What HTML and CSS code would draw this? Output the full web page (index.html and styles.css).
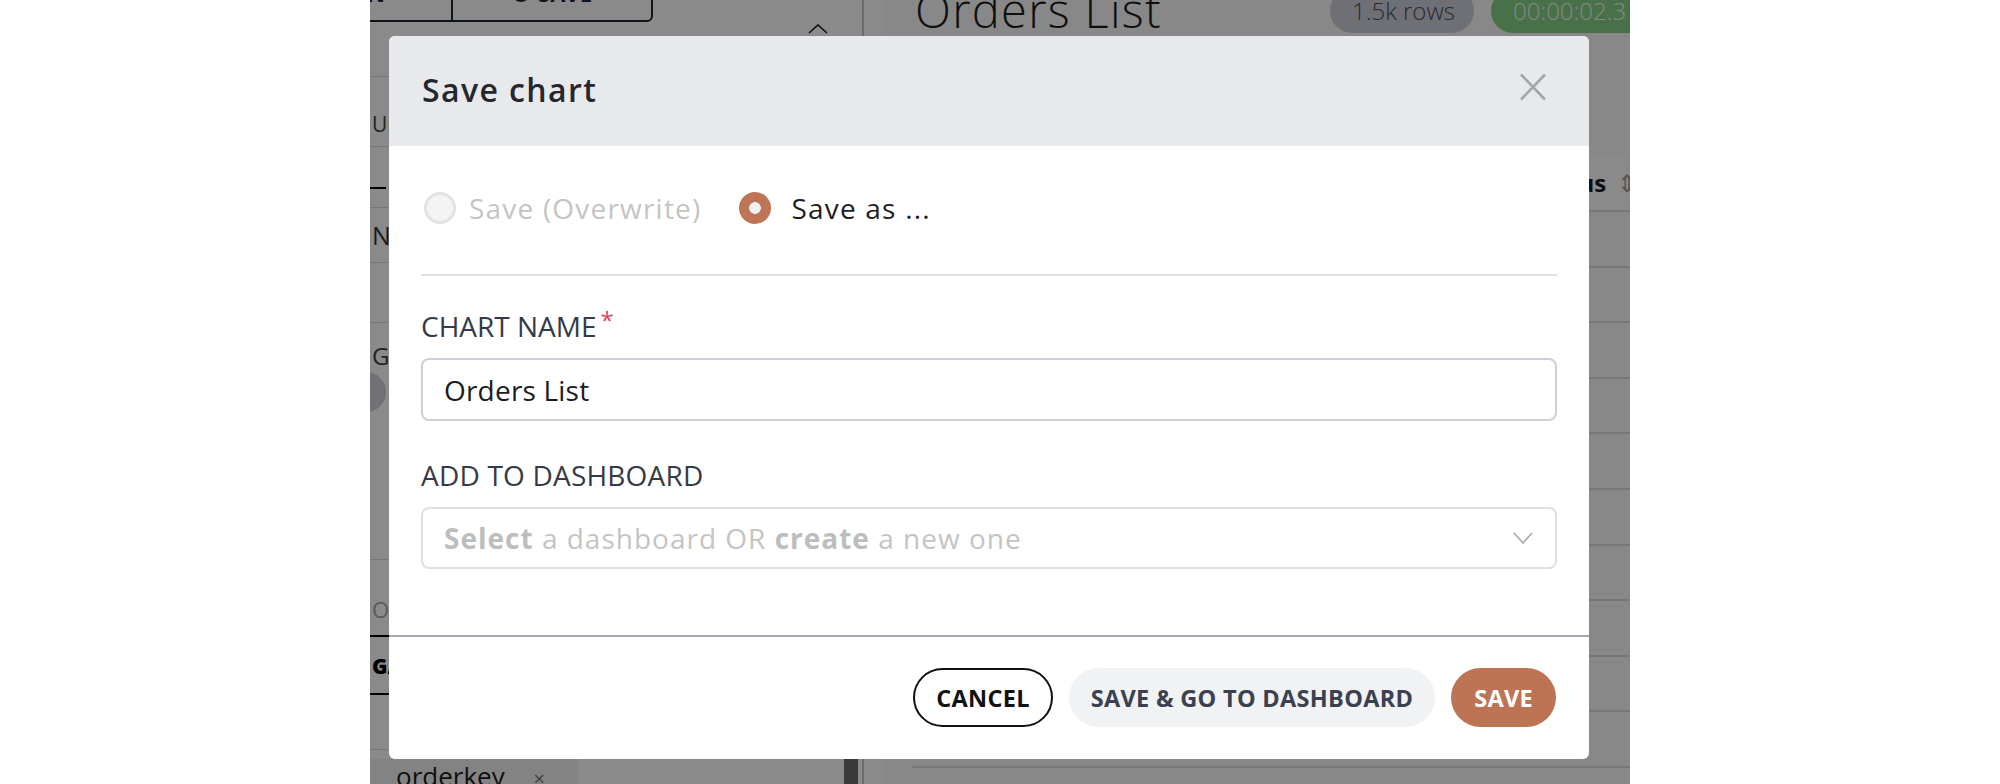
FILE: index.html
```html
<!DOCTYPE html>
<html lang="en">
<head>
<meta charset="utf-8">
<title>Save chart</title>
<link rel="stylesheet" href="styles.css">
</head>
<body>
<div class="app">
  <aside class="sidebar">
    <div class="sb-top">
      <div class="btn-group">
        <span class="tb-btn tb-run">RUN</span>
        <span class="tb-btn tb-save"><span class="tb-dot"></span>SAVE</span>
      </div>
      <svg class="collapse" width="20" height="10" viewBox="0 0 20 10"><path d="M1 9L10 1L19 9" fill="none" stroke="#1c1c1c" stroke-width="1.6"/></svg>
    </div>
    <div class="sb-sec sb-s1"><span class="sb-label">UM</span></div>
    <div class="sb-sec sb-s2"><span class="sb-dash"></span></div>
    <div class="sb-sec sb-s3"><span class="sb-label sb-label-lg">N</span></div>
    <div class="sb-sec sb-s4"></div>
    <div class="sb-sec sb-s5"><span class="sb-label sb-label-md">GE</span><span class="sb-avatar"></span></div>
    <div class="sb-sec sb-s6"><span class="sb-label sb-label-muted">OD</span></div>
    <div class="sb-sec sb-s7"><span class="sb-label sb-label-bold">GA</span></div>
    <div class="sb-sec sb-s8"></div>
    <div class="sb-s9">
      <span class="chip">orderkey <span class="chip-x">×</span></span>
      <span class="scroll-thumb"></span>
    </div>
  </aside>
  <div class="gutter"></div>
  <main class="content">
    <div class="content-head">
      <h1 class="page-title">Orders List</h1>
      <span class="pill pill-rows">1.5k rows</span>
      <span class="pill pill-time">00:00:02.3</span>
    </div>
    <div class="table">
      <div class="tr th">
        <span class="td c1"></span>
        <span class="td c2"></span>
        <span class="td c3">Status <span class="sort">⇕</span></span>
      </div>
      <div class="tr"></div>
      <div class="tr"></div>
      <div class="tr"></div>
      <div class="tr"></div>
      <div class="tr"></div>
      <div class="tr"></div>
      <div class="tr"></div>
      <div class="tr"></div>
      <div class="tr"></div>
      <div class="tr"></div>
    </div>
  </main>

  <div class="backdrop">
    <div class="modal" role="dialog" aria-labelledby="modal-title">
      <header class="modal-header">
        <h2 class="modal-title" id="modal-title">Save chart</h2>
        <button class="close-btn" aria-label="Close">
          <svg width="28" height="28" viewBox="0 0 28 28"><path d="M2 1.5L26 26.5M26 1.5L2 26.5" fill="none" stroke="#a2a5ac" stroke-width="2.6"/></svg>
        </button>
      </header>
      <div class="modal-body">
        <div class="radio-row">
          <label class="radio radio-disabled"><span class="radio-mark"></span>Save (Overwrite)</label>
          <label class="radio radio-checked"><span class="radio-mark"></span>Save as ...</label>
        </div>
        <div class="divider"></div>
        <div class="field-label">CHART NAME<span class="req">*</span></div>
        <div class="text-input">Orders List</div>
        <div class="field-label field-label-second">ADD TO DASHBOARD</div>
        <div class="select">
          <span class="placeholder"><b>Select</b> a dashboard OR <b>create</b> a new one</span>
          <svg class="chevron" width="20" height="12" viewBox="0 0 20 12"><path d="M1 1L10 11L19 1" fill="none" stroke="#a8a8a8" stroke-width="1.6"/></svg>
        </div>
      </div>
      <footer class="modal-footer">
        <button class="btn btn-outline">CANCEL</button>
        <button class="btn btn-light">SAVE &amp; GO TO DASHBOARD</button>
        <button class="btn btn-primary">SAVE</button>
      </footer>
    </div>
  </div>
</div>
</body>
</html>
```

FILE: styles.css
```css
* { box-sizing: border-box; }
html, body { margin: 0; padding: 0; }
body {
  background: #fff;
  font-family: "Open Sans", "Noto Sans", sans-serif;
  width: 2000px;
  height: 784px;
  overflow: hidden;
}

/* ---------- app behind the dialog ---------- */
.app {
  position: relative;
  width: 1260px;
  height: 784px;
  margin: 0 auto;
  background: #fff;
  display: flex;
  overflow: hidden;
}

.sidebar {
  width: 494px;
  flex: none;
  border-right: 2px solid #c4c8d0;
  display: flex;
  flex-direction: column;
  overflow: hidden;
}
.sb-top {
  height: 77px;
  flex: none;
  border-bottom: 1px solid #dcdcdc;
  display: flex;
  justify-content: space-between;
  align-items: flex-start;
  padding-right: 34px;
}
.btn-group {
  margin-top: -34px;
  margin-left: -20px;
  height: 56px;
  width: 303px;
  display: flex;
  border: 2px solid #1f2533;
  border-radius: 0 0 6px 6px;
}
.tb-btn {
  display: flex;
  align-items: flex-end;
  padding-bottom: 12px;
  font-size: 22px;
  font-weight: 700;
  color: #1f2533;
}
.tb-run {
  width: 101px;
  justify-content: flex-end;
  padding-right: 66px;
  border-right: 2px solid #1f2533;
}
.tb-save { flex: 1; justify-content: center; gap: 8px; }
.tb-dot { width: 18px; height: 18px; border-radius: 50%; background: #1f2533; margin-bottom: 6px; }
.collapse { margin-top: 24px; }

.sb-sec { flex: none; border-bottom: 1px solid #dcdcdc; padding-left: 2px; }
.sb-label { display: block; font-size: 21px; color: #444; line-height: 28px; }
.sb-label-lg { font-size: 25px; color: #333; }
.sb-label-md { font-size: 24px; color: #444; }
.sb-label-muted { font-size: 22px; color: #a6a6a6; }
.sb-label-bold { font-size: 21px; font-weight: 800; color: #000; }
.sb-s1 { height: 70px; padding-top: 33px; }
.sb-s2 { height: 61px; padding-top: 40px; }
.sb-dash { display: block; width: 16px; height: 2px; background: #000; margin-left: -2px; }
.sb-s3 { height: 55px; padding-top: 13px; }
.sb-s4 { height: 60px; }
.sb-s5 { height: 237px; padding-top: 19px; }
.sb-avatar { display: block; width: 40px; height: 40px; border-radius: 50%; background: #cfd2da; margin: 2px 0 0 -26px; }
.sb-s6 { height: 77px; padding-top: 35px; border-bottom: 2px solid #000; }
.sb-s7 { height: 58px; padding-top: 15px; border-bottom: 2px solid #000; }
.sb-s8 { height: 55px; }
.sb-s9 { flex: 1; display: flex; justify-content: space-between; padding-top: 9px; }
.chip {
  height: 40px;
  width: 208px;
  background: #f3f3f3;
  padding-left: 26px;
  font-size: 26px;
  line-height: 34px;
  color: #1c1c1c;
}
.chip-x { font-size: 20px; color: #777; margin-left: 22px; }
.scroll-thumb { width: 14px; background: #6b6b6b; margin-right: 4px; }

.gutter { width: 20px; flex: none; background: #fff; }

.content { flex: 1; padding-left: 28px; background: #fbfbfb; min-width: 0; }
.content-head { height: 155px; display: flex; align-items: flex-start; }
.page-title {
  flex: none;
  margin: -18px 0 0 3px;
  font-size: 47px;
  font-weight: 300;
  line-height: 56px;
  color: #1c1c1c;
  letter-spacing: 1.3px;
  white-space: nowrap;
}
.pill {
  flex: none;
  margin-top: -11px;
  height: 44px;
  border-radius: 22px;
  display: flex;
  align-items: flex-end;
  padding: 0 22px 6px;
  font-size: 24px;
  font-weight: 300;
  white-space: nowrap;
}
.pill-rows { margin-left: 168px; width: 144px; background: #cdd0d9; color: #4e4e52; }
.pill-time { margin-left: 17px; width: 160px; background: #86d088; color: #eefdee; }

.table { width: 760px; }
.tr { display: flex; height: 55.6px; border-bottom: 2px solid #dcdcdc; align-items: center; font-size: 22px; color: #333; }
.th { height: 57px; background: #fff; font-weight: 700; color: #1a1a1a; font-size: 24px; }
.td { padding-left: 14px; white-space: nowrap; }
.c1 { width: 300px; }
.c2 { width: 318px; }
.c3 { flex: 1; padding-left: 0; }
.sort { color: #9a9a9a; font-weight: 400; margin-left: 4px; }

/* ---------- dialog ---------- */
.backdrop {
  position: absolute;
  inset: 0;
  background: rgba(0, 0, 0, 0.46);
  padding: 36px 0 0 19px;
}
.modal {
  width: 1200px;
  height: 723px;
  background: #fff;
  border-radius: 6px;
  overflow: hidden;
  display: flex;
  flex-direction: column;
}
.modal-header {
  height: 110px;
  flex: none;
  background: #e8e9ed;
  display: flex;
  align-items: center;
  justify-content: space-between;
  padding: 0 42px 0 33px;
}
.modal-title {
  margin: -4px 0 0;
  font-size: 32px;
  font-weight: 600;
  color: #25272d;
  letter-spacing: 1.4px;
}
.close-btn {
  border: 0;
  background: none;
  padding: 0;
  width: 28px;
  height: 28px;
  margin-top: -9px;
  display: flex;
}

.modal-body {
  flex: 1;
  padding: 0 32px;
}
.radio-row {
  display: flex;
  align-items: center;
  height: 32px;
  margin-top: 46px;
}
.radio {
  display: flex;
  align-items: center;
  gap: 13px;
  font-size: 28px;
  letter-spacing: 1.2px;
  white-space: nowrap;
}
.radio-mark { width: 32px; height: 32px; border-radius: 50%; flex: none; }
.radio-disabled { color: #c4c4c4; margin-left: 3px; }
.radio-disabled .radio-mark { border: 3px solid #e2e2e2; background: #f3f3f3; }
.radio-checked { color: #1e1e1e; margin-left: 38px; gap: 20px; }
.radio-checked .radio-mark { background: radial-gradient(circle, #f1f1f1 0 5.5px, #be7457 6.2px); }

.divider { height: 2px; background: #e2e2e2; margin-top: 50px; }

.field-label {
  margin-top: 30px;
  font-size: 28px;
  line-height: 40px;
  color: #343a47;
  white-space: nowrap;
}
.field-label-second { margin-top: 34px; letter-spacing: 0.2px; }
.req { color: #e0455c; font-size: 24px; vertical-align: top; line-height: 28px; margin-left: 4px; }

.text-input {
  margin-top: 12px;
  height: 63px;
  border: 2px solid #cdd0d6;
  border-radius: 8px;
  padding-left: 21px;
  display: flex;
  align-items: center;
  font-size: 28px;
  color: #1c1c1c;
  letter-spacing: 0.2px;
}
.select {
  margin-top: 12px;
  height: 62px;
  border: 2px solid #e0e0e0;
  border-radius: 8px;
  padding: 0 22px 0 21px;
  display: flex;
  align-items: center;
  justify-content: space-between;
}
.placeholder { font-size: 28px; color: #c4c4c4; letter-spacing: 1px; white-space: nowrap; }
.placeholder b { font-weight: 700; color: #bdbdbd; }

.modal-footer {
  flex: none;
  height: 124px;
  border-top: 2px solid #a5a9b2;
  display: flex;
  align-items: center;
  justify-content: flex-end;
  gap: 16px;
  padding: 0 33px 1px 0;
}
.btn {
  height: 59px;
  border-radius: 30px;
  padding: 0 22px;
  font-family: inherit;
  font-size: 23.5px;
  font-weight: 700;
  letter-spacing: 0.3px;
  border: 0;
  white-space: nowrap;
  display: flex;
  align-items: center;
}
.btn-outline { background: #fff; border: 2px solid #111; color: #111; padding: 0 21px; }
.btn-light { background: #f1f2f4; color: #3b4150; }
.btn-primary { background: #bd7455; color: #fff; padding: 0 23px; }
```
